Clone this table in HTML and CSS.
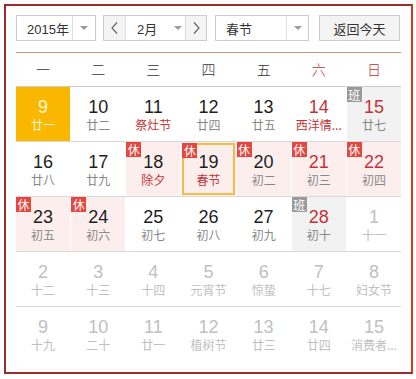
FILE: index.html
```html
<!DOCTYPE html>
<html lang="zh">
<head>
<meta charset="utf-8">
<title>万年历</title>
<link rel="stylesheet" href="styles.css">
</head>
<body>
<div class="cal">
  <div class="head">
    <div class="sel year">
      <span class="val">2015年</span>
      <span class="arr"><svg width="8" height="4" viewBox="0 0 8 4"><path d="M0 0h8L4 4z" fill="#999"/></svg></span>
    </div>
    <div class="mgroup">
      <span class="nav"><svg width="7" height="12" viewBox="0 0 7 12"><path d="M6 0.5L1 6l5 5.5" fill="none" stroke="#666" stroke-width="1.2"/></svg></span>
      <span class="mval">2月<svg class="marr" width="8" height="4" viewBox="0 0 8 4"><path d="M0 0h8L4 4z" fill="#999"/></svg></span>
      <span class="nav"><svg width="7" height="12" viewBox="0 0 7 12"><path d="M1 0.5L6 6l-5 5.5" fill="none" stroke="#666" stroke-width="1.2"/></svg></span>
    </div>
    <div class="sel hol">
      <span class="val">春节</span>
      <span class="arr"><svg width="8" height="4" viewBox="0 0 8 4"><path d="M0 0h8L4 4z" fill="#999"/></svg></span>
    </div>
    <span class="today">返回今天</span>
  </div>

  <div class="weekdays">
    <span>一</span><span>二</span><span>三</span><span>四</span><span>五</span><span class="we">六</span><span class="we">日</span>
  </div>

  <div class="row">
    <div class="cell cur"><b>9</b><i>廿一</i></div>
    <div class="cell"><b>10</b><i>廿二</i></div>
    <div class="cell"><b>11</b><i class="fest">祭灶节</i></div>
    <div class="cell"><b>12</b><i>廿四</i></div>
    <div class="cell"><b>13</b><i>廿五</i></div>
    <div class="cell"><b class="red">14</b><i class="fest">西洋情...</i></div>
    <div class="cell work"><span class="badge gray">班</span><b class="red">15</b><i>廿七</i></div>
  </div>
  <div class="row">
    <div class="cell"><b>16</b><i>廿八</i></div>
    <div class="cell"><b>17</b><i>廿九</i></div>
    <div class="cell rest"><span class="badge">休</span><b>18</b><i class="fest">除夕</i></div>
    <div class="cell rest selected"><span class="badge">休</span><b>19</b><i class="fest">春节</i></div>
    <div class="cell rest"><span class="badge">休</span><b>20</b><i>初二</i></div>
    <div class="cell rest"><span class="badge">休</span><b class="red">21</b><i>初三</i></div>
    <div class="cell rest"><span class="badge">休</span><b class="red">22</b><i>初四</i></div>
  </div>
  <div class="row">
    <div class="cell rest"><span class="badge">休</span><b>23</b><i>初五</i></div>
    <div class="cell rest"><span class="badge">休</span><b>24</b><i>初六</i></div>
    <div class="cell"><b>25</b><i>初七</i></div>
    <div class="cell"><b>26</b><i>初八</i></div>
    <div class="cell"><b>27</b><i>初九</i></div>
    <div class="cell work"><span class="badge gray">班</span><b class="red">28</b><i>初十</i></div>
    <div class="cell other"><b>1</b><i>十一</i></div>
  </div>
  <div class="row">
    <div class="cell other"><b>2</b><i>十二</i></div>
    <div class="cell other"><b>3</b><i>十三</i></div>
    <div class="cell other"><b>4</b><i>十四</i></div>
    <div class="cell other"><b>5</b><i>元宵节</i></div>
    <div class="cell other"><b>6</b><i>惊蛰</i></div>
    <div class="cell other"><b>7</b><i>十七</i></div>
    <div class="cell other"><b>8</b><i>妇女节</i></div>
  </div>
  <div class="row last">
    <div class="cell other"><b>9</b><i>十九</i></div>
    <div class="cell other"><b>10</b><i>二十</i></div>
    <div class="cell other"><b>11</b><i>廿一</i></div>
    <div class="cell other"><b>12</b><i>植树节</i></div>
    <div class="cell other"><b>13</b><i>廿三</i></div>
    <div class="cell other"><b>14</b><i>廿四</i></div>
    <div class="cell other"><b>15</b><i>消费者...</i></div>
  </div>
</div>
</body>
</html>
```

FILE: styles.css
```css
html, body {
  margin: 0;
  background: #fff;
}
body {
  font-family: "Liberation Sans", "Noto Sans CJK SC", sans-serif;
  color: #333;
}
.cal {
  margin: 4px 0 0 4px;
  width: 385px;
  padding: 9px 10px 11px;
  border: 2px solid #9c2b2b;
  border-right-color: #d23b1f;
  background: #fff;
}

/* header */
.head {
  display: flex;
  height: 26px;
  font-size: 13px;
  color: #333;
}
.sel {
  display: flex;
  border: 1px solid #ccc;
  background: #fff;
}
.sel .val {
  display: flex;
  align-items: center;
  padding-left: 10px;
  border-right: 1px solid #ddd;
}
.sel .arr {
  display: flex;
  align-items: center;
  justify-content: center;
}
.year { width: 78px; }
.year .val { width: 45px; }
.year .arr { width: 22px; }
.mgroup {
  display: flex;
  width: 102px;
  margin-left: 7px;
  border: 1px solid #ccc;
}
.nav {
  display: flex;
  align-items: center;
  justify-content: center;
  width: 21px;
  background: #f4f4f4;
}
.nav:last-child { width: 20px; }
.mval {
  display: flex;
  align-items: center;
  width: 48px;
  padding-left: 11px;
  border-left: 1px solid #ddd;
  border-right: 1px solid #ddd;
  background: #fff;
}
.marr { margin-left: 17px; }
.hol {
  width: 92px;
  margin-left: 8px;
}
.hol .val { width: 60px; }
.hol .arr { width: 21px; }
.today {
  display: flex;
  align-items: center;
  justify-content: center;
  width: 79px;
  margin-left: 10px;
  border: 1px solid #ccc;
  background: #f4f4f4;
}

/* weekdays */
.weekdays {
  display: grid;
  grid-template-columns: repeat(7, 1fr);
  column-gap: 1px;
  margin-top: 11px;
  height: 33px;
  border-top: 1px solid #c9917f;
  border-bottom: 1px solid #ccc;
  font-family: "Noto Sans CJK SC", sans-serif;
  font-size: 14px;
  font-weight: 300;
  line-height: 33px;
  text-align: center;
  color: #333;
}
.weekdays .we { color: #c0302e; }

/* day grid */
.row {
  display: grid;
  grid-template-columns: repeat(7, 1fr);
  column-gap: 1px;
  height: 54px;
  border-bottom: 1px solid #d8d8d8;
}
.row.last { border-bottom: 0; }
.cell {
  position: relative;
  display: flex;
  flex-direction: column;
  align-items: center;
  padding-top: 10px;
}
.cell b {
  font-weight: normal;
  font-size: 18px;
  line-height: 20px;
  color: #1e1e1e;
}
.cell i {
  font-style: normal;
  font-family: "Noto Sans CJK SC", sans-serif;
  font-size: 12px;
  line-height: 17px;
  margin-top: -1px;
  white-space: nowrap;
  color: #888;
}
.cell b.red { color: #c53338; }
.cell i.fest { color: #c53338; }
.cur { background: #f9b700; }
.cur b, .cur i { color: #fff6d8; }
.rest { background: #fdeeee; }
.work { background: #f2f2f2; }
.other b, .other i { color: #c0c0c0; }
.selected {
  outline: 2px solid #f2bd45;
  outline-offset: -3px;
}
.badge {
  position: absolute;
  top: 0;
  left: 0;
  width: 15px;
  height: 15px;
  overflow: hidden;
  font-family: "Noto Sans CJK SC", sans-serif;
  font-size: 12px;
  line-height: 15px;
  text-align: center;
  color: #fff;
  background: #e4473f;
}
.badge.gray { background: #9a9a9a; }
.selected .badge { top: 1px; left: 1px; }
```
